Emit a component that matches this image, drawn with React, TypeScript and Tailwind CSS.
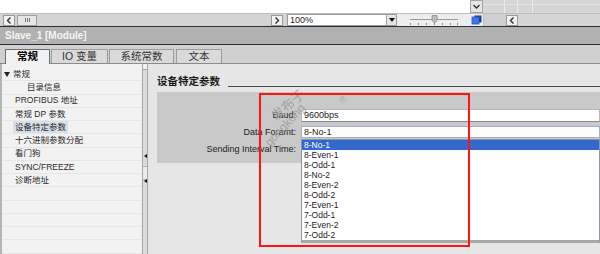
import React from "react";

const treeItems: { text: string; indent: number; root?: boolean; selected?: boolean }[] = [
  { text: "常规", indent: 13, root: true },
  { text: "目录信息", indent: 27 },
  { text: "PROFIBUS 地址", indent: 15 },
  { text: "常规 DP 参数", indent: 15 },
  { text: "设备特定参数", indent: 15, selected: true },
  { text: "十六进制参数分配", indent: 15 },
  { text: "看门狗", indent: 15 },
  { text: "SYNC/FREEZE", indent: 15 },
  { text: "诊断地址", indent: 15 },
];

const listItems = [
  "8-No-1",
  "8-Even-1",
  "8-Odd-1",
  "8-No-2",
  "8-Even-2",
  "8-Odd-2",
  "7-Even-1",
  "7-Odd-1",
  "7-Even-2",
  "7-Odd-2",
];

function Chevron({ dir }: { dir: "left" | "right" | "down" }) {
  const d =
    dir === "left" ? "M5.5 1.5 L2.5 4.5 L5.5 7.5" : dir === "right" ? "M2.5 1.5 L5.5 4.5 L2.5 7.5" : "M1.5 3 L4.5 6 L7.5 3";
  return (
    <svg width="9" height="9" viewBox="0 0 9 9">
      <path d={d} fill="none" stroke="#303030" strokeWidth="1.4" />
    </svg>
  );
}

export default function App() {
  return (
    <div className="relative w-[600px] h-[254px] overflow-hidden flex flex-col bg-[#e6e6e6] font-['Liberation_Sans','Noto_Sans_CJK_SC',sans-serif] text-[#2a2a2a]">
      {/* row 1 */}
      <div className="h-[13px] flex shrink-0">
        <div className="w-[470px] bg-white" />
        <div className="w-[13px] bg-[#e6e6e6] border border-[#a4a4a4] flex items-center justify-center">
          <Chevron dir="down" />
        </div>
        <div className="flex-1 bg-[#d6d6d6] flex relative">
          <div className="w-[22px] border-r border-[#ececec]" />
          <div className="w-[13px] border-r border-[#ececec]" />
          <div className="w-[15px] border-r border-[#ececec]" />
          <div className="absolute left-0 right-0 top-[4px] h-px bg-[#e4e4e4]" />
        </div>
      </div>
      {/* row 2 */}
      <div className="h-[13px] flex shrink-0 bg-[#d4d4d4] border-t border-[#bdbdbd] items-center">
        <div className="w-[285px] flex items-center pl-[3px] h-full">
          <div className="w-[12px] h-[11px] bg-[#f2f2f2] border border-[#999] flex items-center justify-center">
            <Chevron dir="left" />
          </div>
          <div className="ml-[2px] w-[20px] h-[11px] bg-[#e6e6e6] border border-[#a0a0a0] flex items-center justify-center gap-[1px]">
            <div className="w-px h-[4px] bg-[#777]" />
            <div className="w-px h-[4px] bg-[#777]" />
            <div className="w-px h-[4px] bg-[#777]" />
          </div>
          <div className="flex-1" />
          <div className="w-[12px] h-[11px] bg-[#f2f2f2] border border-[#999] flex items-center justify-center mr-[2px]">
            <Chevron dir="right" />
          </div>
        </div>
        <div className="w-[2px]" />
        <div className="w-[110px] h-[12px] bg-white border border-[#9a9a9a] flex items-center">
          <span className="flex-1 pl-[2px] text-[9px] leading-none text-[#222]">100%</span>
          <div className="w-[10px] h-full bg-[#e4e4e4] border-l border-[#a0a0a0] flex items-center justify-center">
            <svg width="6" height="4" viewBox="0 0 6 4">
              <path d="M0 0 L6 0 L3 4 Z" fill="#111" />
            </svg>
          </div>
        </div>
        <div className="w-[73px] h-full bg-[#eeeeee] flex items-center justify-center">
          <svg width="50" height="12" viewBox="0 0 50 12">
            <line x1="1" y1="5.5" x2="49" y2="5.5" stroke="#9a9a9a" strokeWidth="1" />
            {[1, 9, 17, 25, 33, 41, 48].map((x) => (
              <rect key={x} x={x} y="9" width="1" height="2" fill="#888" />
            ))}
            <path d="M23 1.5 h5 v5 l-2.5 2.5 l-2.5 -2.5 z" fill="#bcbcbc" stroke="#8a8a8a" strokeWidth="0.8" />
          </svg>
        </div>
        <div className="w-[13px] h-full bg-[#eeeeee] flex items-center justify-center">
          <svg width="11" height="10" viewBox="0 0 11 10">
            <rect x="3.5" y="0.5" width="7" height="7" fill="#1c3c8c" />
            <rect x="1" y="2" width="7" height="7" fill="#3f74ec" stroke="#2a55c0" strokeWidth="0.8" />
          </svg>
        </div>
        <div className="w-[23px] h-full bg-[#cfcfcf] border-l border-[#bcbcbc]" />
        <div className="w-[12px] h-[11px] bg-[#f2f2f2] border border-[#999] flex items-center justify-center">
          <Chevron dir="left" />
        </div>
        <div className="flex-1 h-full bg-[#d6d6d6]" />
      </div>
      <div className="h-px shrink-0 bg-[#25303c]" />
      {/* title */}
      <div className="h-[17px] shrink-0 bg-[#b1b1b1] flex items-center pl-[5px] text-[10px] font-bold text-[#f6f6f6]">
        Slave_1 [Module]
      </div>
      <div className="h-px shrink-0 bg-[#25303c]" />
      {/* tabs */}
      <div className="h-[19px] shrink-0 bg-[#d0d0d0] flex items-end pl-[5px] border-b border-[#8c8c8c]">
        <div className="w-[45px] h-[15px] bg-[#f2f2f2] border border-b-0 border-[#6e6e6e] flex items-center justify-center text-[10.5px] font-bold text-black mb-[-1px]">
          常规
        </div>
        <div className="ml-[1px] w-[57px] h-[14px] bg-[#dadada] border border-b-0 border-[#9c9c9c] flex items-center justify-center text-[10.5px] text-[#333]">
          IO 变量
        </div>
        <div className="ml-[1px] w-[65px] h-[14px] bg-[#dadada] border border-b-0 border-[#9c9c9c] flex items-center justify-center text-[10.5px] text-[#333]">
          系统常数
        </div>
        <div className="ml-[2px] w-[46px] h-[14px] bg-[#dadada] border border-b-0 border-[#9c9c9c] flex items-center justify-center text-[10.5px] text-[#333]">
          文本
        </div>
      </div>
      {/* main */}
      <div className="flex-1 flex min-h-0">
        {/* tree */}
        <div className="w-[142px] bg-[#f2f2f2] border-l-2 border-[#b4b4b4] pt-[4px] flex flex-col">
          {treeItems.map((it, i) => (
            <div
              key={i}
              className="relative h-[13.25px] shrink-0 flex items-center border-b border-[#e6e6e6] text-[8.5px] leading-none"
              style={{ paddingLeft: it.indent - 2 }}
            >
              {it.root && (
                <svg width="6" height="5" viewBox="0 0 6 5" className="absolute left-[2px] top-[4px]">
                  <path d="M0 0 L6 0 L3 5 Z" fill="#222" />
                </svg>
              )}
              <span className={it.selected ? "bg-[#d6e0ec] px-[2px] py-[2px] -ml-[2px]" : ""}>{it.text}</span>
            </div>
          ))}
          {Array.from({ length: 6 }).map((_, i) => (
            <div key={i} className="h-[13.25px] shrink-0 border-b border-[#e6e6e6]" />
          ))}
        </div>
        {/* splitter scrollbar */}
        <div className="w-[6px] bg-[#dcdcdc] border-x border-[#a6a6a6] flex flex-col items-center">
          <div className="w-full h-[6px] border-b border-[#a6a6a6] bg-[#f0f0f0]" />
          <div className="mt-[84px] w-0 h-0 border-y-[2px] border-y-transparent border-r-[3px] border-r-[#111]" />
          <div className="mt-[8px] w-full h-[14px] bg-[#ececec] border-y border-[#b0b0b0]" />
          <div className="mt-[-1px] w-0 h-0 border-y-[2px] border-y-transparent border-r-[3px] border-r-[#111]" />
        </div>
        {/* content */}
        <div className="flex-1 flex flex-col pl-[9px] pt-[10px] bg-[#e6e6e6]">
          <div className="flex items-end h-[12px]">
            <span className="text-[10.5px] font-bold leading-none text-[#1a1a1a] whitespace-nowrap">设备特定参数</span>
            <div className="flex-1 ml-[8px] h-px bg-[#4a4a4a] mb-[-1px]" />
          </div>
          <div className="mt-[6px] h-[71px] bg-[#c9c9c9] pt-[17px] flex flex-col">
            <div className="flex items-center h-[13px]">
              <div className="w-[139px] text-right text-[9px] leading-none text-[#222]">Baud:</div>
              <div className="ml-[5px] flex-1 h-[13px] bg-white border border-[#b8b8b8] border-b-[#8a8a8a] flex items-center pl-[2px] text-[9px] leading-none text-[#222]">
                9600bps
              </div>
            </div>
            <div className="flex items-center h-[12px] mt-[4px]">
              <div className="w-[139px] text-right text-[9px] leading-none text-[#222]">Data Foramt:</div>
              <div className="ml-[5px] flex-1 h-[12px] bg-white border border-[#9fb0c8] flex items-center pl-[2px] text-[9px] leading-none text-[#222]">
                8-No-1
              </div>
            </div>
            <div className="flex items-center h-[12px] mt-[5px]">
              <div className="w-[139px] text-right text-[9px] leading-none text-[#222]">Sending Interval Time:</div>
            </div>
          </div>
        </div>
      </div>

      {/* dropdown list overlay */}
      <div className="absolute left-[301px] top-[139px] right-0 h-[104px] bg-white border border-[#8a96a4] border-b-[3px] border-b-[#a8a8a8] flex flex-col">
        {listItems.map((t, i) => (
          <div
            key={t}
            className={
              "h-[10px] shrink-0 flex items-center pl-[2px] text-[8.5px] leading-none " +
              (i === 0 ? "bg-[#3467cc] text-white" : "text-[#222]")
            }
          >
            {t}
          </div>
        ))}
      </div>

      {/* watermark */}
      <div className="absolute left-[288px] top-[105px] -translate-x-1/2 -translate-y-1/2 rotate-[-40deg] text-[13px] leading-none text-[#a2a2a2] whitespace-nowrap pointer-events-none">
        发布于
      </div>
      <div className="absolute left-[285px] top-[125px] -translate-x-1/2 -translate-y-1/2 rotate-[-47deg] text-[12px] leading-none text-[#a2a2a2] whitespace-nowrap pointer-events-none">
        gongkong
      </div>
      <div className="absolute left-[339px] top-[96px] text-[9px] leading-none text-[#a8a8a8] pointer-events-none">®</div>

      {/* red annotation box */}
      <div className="absolute left-[259px] top-[93px] w-[211px] h-[154px] border-2 border-[#ff1414] pointer-events-none" />
    </div>
  );
}
